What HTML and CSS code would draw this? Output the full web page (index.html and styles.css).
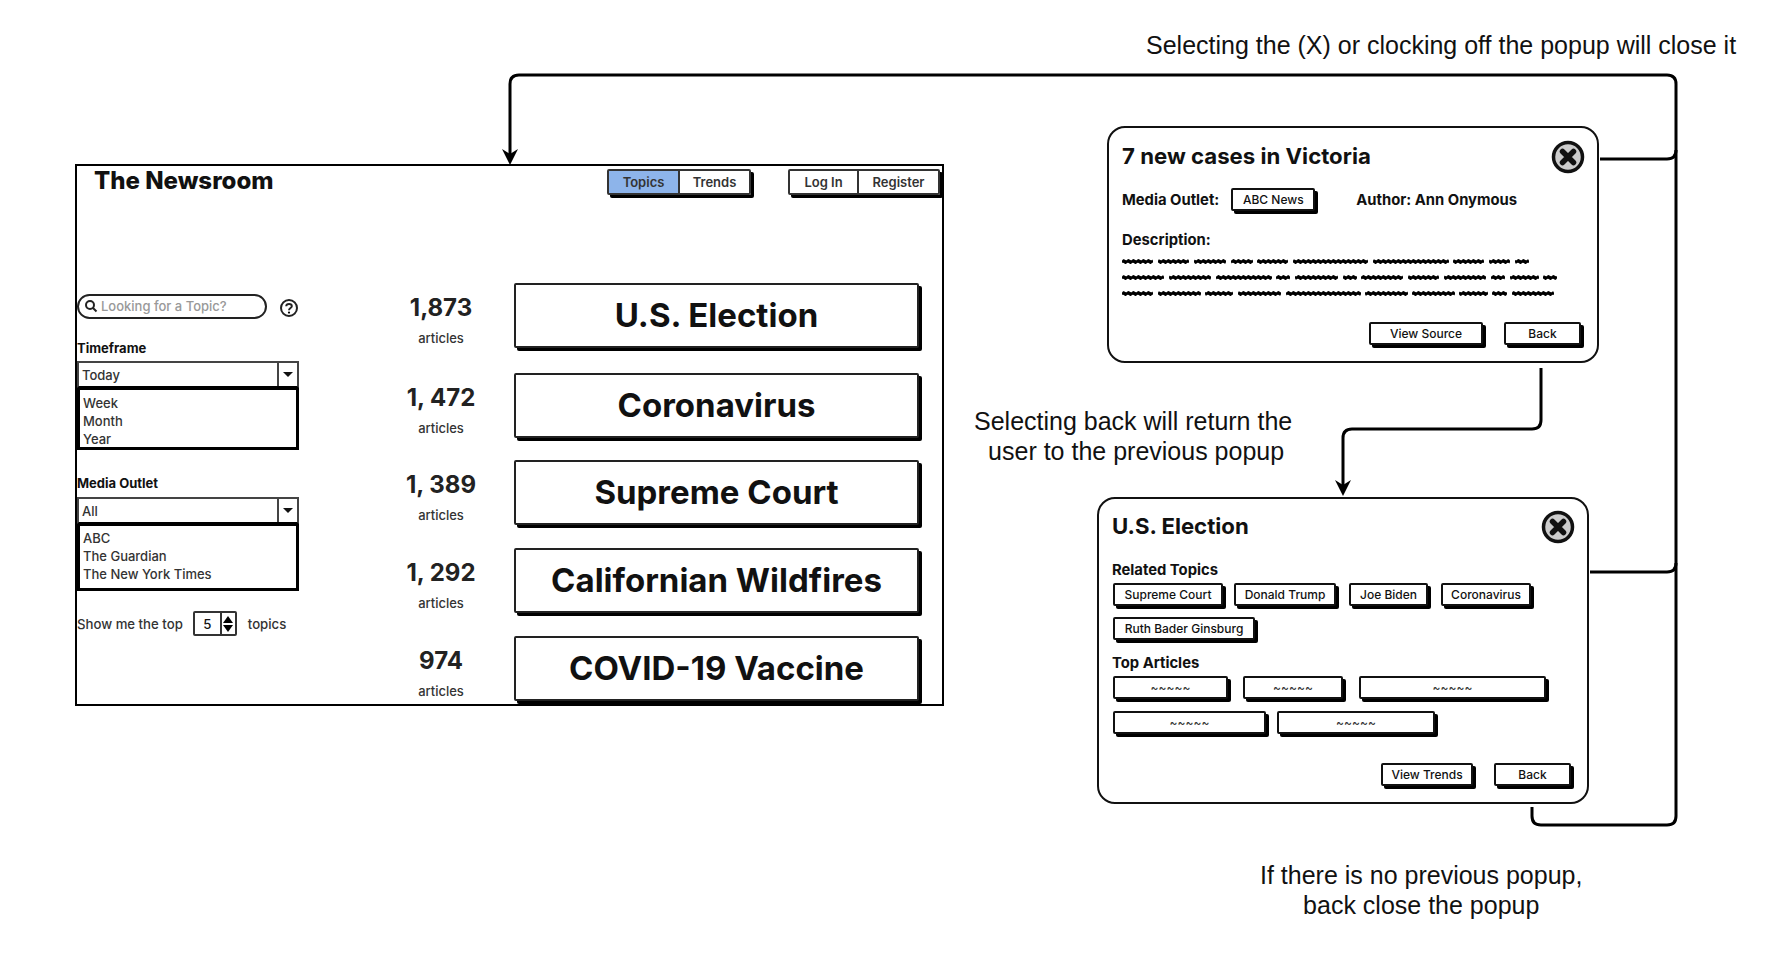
FILE: index.html
```html
<!DOCTYPE html>
<html lang="en">
<head>
    <meta charset="UTF-8">
    <title>The Newsroom - popup flow</title>
    <link rel="stylesheet" href="styles.css">
</head>
<body>
    <div class="canvas">
        <!-- connectors between the screens -->
        <svg class="wires" width="1782" height="958" viewBox="0 0 1782 958">
            <g class="wire">
                <path d="M510 155V84Q510 75 519 75H1667Q1676 75 1676 84V816Q1676 825 1667 825H1541Q1532 825 1532 816V807"/>
                <path d="M1600 159H1667Q1676 159 1676 150"/>
                <path d="M1590 572H1667Q1676 572 1676 563"/>
                <path d="M1541 368V420Q1541 429 1532 429H1352Q1343 429 1343 438V485"/>
            </g>
            <path class="tip" d="M502 149L510 154L518 149L510 165Z"/>
            <path class="tip" d="M1335 480L1343 485L1351 480L1343 496Z"/>
        </svg>

        <p class="note note-close">Selecting the (X) or clocking off the popup will close it</p>
        <p class="note note-back">Selecting back will return the<br><span class="note-nudge">user to the previous popup</span></p>
        <p class="note note-none">If there is no previous popup,<br>back close the popup</p>

        <!-- main screen -->
        <div class="screen">
            <div class="screen-top">
                <h1>The Newsroom</h1>
                <div class="tabs tabs-nav">
                    <span class="tab active tab-topics">Topics</span>
                    <span class="tab tab-trends">Trends</span>
                </div>
                <div class="tabs tabs-user">
                    <span class="tab tab-login">Log In</span>
                    <span class="tab tab-register">Register</span>
                </div>
            </div>
            <div class="screen-body">
                <div class="sidebar">
                    <div class="search-row">
                        <div class="search">
                            <svg width="14" height="14" viewBox="0 0 14 14"><circle cx="6" cy="6" r="4" class="line"/><path d="M9 9L12.5 12.5" class="line"/></svg>
                            <span>Looking for a Topic?</span>
                        </div>
                        <svg class="help" width="20" height="20" viewBox="0 0 20 20"><circle cx="10" cy="10" r="8" class="line"/><path d="M7.2 8.2C7.4 5.4 12.8 5.4 12.8 8.2C12.8 10 10 10 10 12.2" class="line"/><circle cx="10" cy="14.6" r="1.1"/></svg>
                    </div>

                    <div class="field-label label-time">Timeframe</div>
                    <div class="select"><span>Today</span><b class="select-arrow"></b></div>
                    <ul class="options">
                        <li>Week</li>
                        <li>Month</li>
                        <li>Year</li>
                    </ul>

                    <div class="field-label label-media">Media Outlet</div>
                    <div class="select select-media"><span>All</span><b class="select-arrow"></b></div>
                    <ul class="options options-media">
                        <li>ABC</li>
                        <li>The Guardian</li>
                        <li>The New York Times</li>
                    </ul>

                    <div class="top-row">
                        <span>Show me the top</span>
                        <div class="spinner">
                            <span class="spinner-value">5</span>
                            <span class="spinner-btns"><svg width="12" height="20" viewBox="0 0 12 20"><path d="M6 2L11 9H1Z"/><path d="M6 18L11 11H1Z"/></svg></span>
                        </div>
                        <span class="top-after">topics</span>
                    </div>
                </div>

                <div class="topics">
                    <div class="topic-row">
                        <div class="count"><strong>1,873</strong><span>articles</span></div>
                        <div class="topic">U.S. Election</div>
                    </div>
                    <div class="topic-row">
                        <div class="count"><strong>1, 472</strong><span>articles</span></div>
                        <div class="topic">Coronavirus</div>
                    </div>
                    <div class="topic-row">
                        <div class="count"><strong>1, 389</strong><span>articles</span></div>
                        <div class="topic">Supreme Court</div>
                    </div>
                    <div class="topic-row">
                        <div class="count"><strong>1, 292</strong><span>articles</span></div>
                        <div class="topic">Californian Wildfires</div>
                    </div>
                    <div class="topic-row">
                        <div class="count"><strong>974</strong><span>articles</span></div>
                        <div class="topic">COVID-19 Vaccine</div>
                    </div>
                </div>
            </div>
        </div>

        <!-- article popup -->
        <div class="popup popup-article">
            <div class="popup-head">
                <h2>7 new cases in Victoria</h2>
                <svg class="close" width="34" height="34" viewBox="0 0 34 34"><circle cx="17" cy="17" r="14.5" class="close-ring"/><path d="M11.5 11.5L22.5 22.5M22.5 11.5L11.5 22.5" class="close-x"/></svg>
            </div>
            <div class="meta">
                <strong>Media Outlet:</strong>
                <span class="btn btn-outlet">ABC News</span>
                <strong class="author">Author: Ann Onymous</strong>
            </div>
            <div class="section-label desc-label">Description:</div>
            <svg class="scribble" width="440" height="40" viewBox="0 0 440 40">
                <defs>
                    <pattern id="wave" width="5" height="16" patternUnits="userSpaceOnUse">
                        <path d="M0 1Q1.2 -.6 2.5 .6T5 1V4Q3.8 5.6 2.5 4.4T0 4Z"/>
                    </pattern>
                </defs>
                <g fill="url(#wave)">
                    <rect x="0" y="0" width="31" height="5" rx="2"/><rect x="36" y="0" width="31" height="5" rx="2"/><rect x="72" y="0" width="32" height="5" rx="2"/><rect x="109" y="0" width="22" height="5" rx="2"/><rect x="135" y="0" width="31" height="5" rx="2"/><rect x="171" y="0" width="75" height="5" rx="2"/><rect x="251" y="0" width="76" height="5" rx="2"/><rect x="331" y="0" width="31" height="5" rx="2"/><rect x="367" y="0" width="21" height="5" rx="2"/><rect x="393" y="0" width="14" height="5" rx="2"/>
                    <rect x="0" y="16" width="42" height="5" rx="2"/><rect x="47" y="16" width="42" height="5" rx="2"/><rect x="94" y="16" width="56" height="5" rx="2"/><rect x="154" y="16" width="14" height="5" rx="2"/><rect x="173" y="16" width="43" height="5" rx="2"/><rect x="221" y="16" width="14" height="5" rx="2"/><rect x="239" y="16" width="42" height="5" rx="2"/><rect x="286" y="16" width="31" height="5" rx="2"/><rect x="322" y="16" width="42" height="5" rx="2"/><rect x="369" y="16" width="14" height="5" rx="2"/><rect x="388" y="16" width="29" height="5" rx="2"/><rect x="421" y="16" width="14" height="5" rx="2"/>
                    <rect x="0" y="32" width="31" height="5" rx="2"/><rect x="36" y="32" width="43" height="5" rx="2"/><rect x="83" y="32" width="28" height="5" rx="2"/><rect x="116" y="32" width="43" height="5" rx="2"/><rect x="164" y="32" width="75" height="5" rx="2"/><rect x="243" y="32" width="43" height="5" rx="2"/><rect x="290" y="32" width="43" height="5" rx="2"/><rect x="337" y="32" width="29" height="5" rx="2"/><rect x="370" y="32" width="15" height="5" rx="2"/><rect x="390" y="32" width="42" height="5" rx="2"/>
                </g>
            </svg>
            <div class="popup-actions">
                <span class="btn btn-source">View Source</span>
                <span class="btn btn-back">Back</span>
            </div>
        </div>

        <!-- topic popup -->
        <div class="popup popup-topic">
            <div class="popup-head">
                <h2>U.S. Election</h2>
                <svg class="close" width="34" height="34" viewBox="0 0 34 34"><circle cx="17" cy="17" r="14.5" class="close-ring"/><path d="M11.5 11.5L22.5 22.5M22.5 11.5L11.5 22.5" class="close-x"/></svg>
            </div>
            <div class="section-label related-label">Related Topics</div>
            <div class="chips">
                <span class="btn chip chip-w110">Supreme Court</span>
                <span class="btn chip chip-w102">Donald Trump</span>
                <span class="btn chip chip-w79">Joe Biden</span>
                <span class="btn chip chip-w90">Coronavirus</span>
                <span class="btn chip chip-w142">Ruth Bader Ginsburg</span>
            </div>
            <div class="section-label articles-label">Top Articles</div>
            <div class="chips chips-articles">
                <span class="btn chip chip-w115">~~~~~</span>
                <span class="btn chip chip-w100">~~~~~</span>
                <span class="btn chip chip-w187">~~~~~</span>
                <span class="btn chip chip-w153">~~~~~</span>
                <span class="btn chip chip-w158">~~~~~</span>
            </div>
            <div class="popup-actions">
                <span class="btn btn-trends">View Trends</span>
                <span class="btn btn-back">Back</span>
            </div>
        </div>
    </div>
</body>
</html>
```

FILE: styles.css
```css
* {
    box-sizing: border-box;
}

body {
    margin: 0;
    background-color: #fff;
    color: #111;
    font-family: 'Inter', 'Noto Sans', sans-serif;
}

.canvas {
    position: relative;
    width: 1782px;
    height: 958px;
    overflow: hidden;
}

/* connectors */
.wires {
    position: absolute;
    left: 0;
    top: 0;
}

.wire path {
    fill: none;
    stroke: #000;
    stroke-width: 3;
}

.tip {
    fill: #000;
}

.note {
    position: absolute;
    margin: 0;
    font-family: 'Liberation Sans', Arial, sans-serif;
    font-size: 25px;
    line-height: 30px;
    color: #111;
    text-align: center;
    white-space: nowrap;
}

.note-close {
    left: 1146px;
    top: 30px;
}

.note-back {
    left: 974px;
    top: 406px;
}

.note-nudge {
    margin-left: 6px;
}

.note-none {
    left: 1260px;
    top: 860px;
}

/* main screen */
.screen {
    position: absolute;
    left: 75px;
    top: 164px;
    width: 869px;
    height: 542px;
    border: 2px solid #000;
    background-color: #fff;
}

.screen-top {
    display: flex;
    align-items: flex-start;
    height: 117px;
}

h1 {
    margin: 0 0 0 17px;
    width: 513px;
    font-size: 24px;
    line-height: 30px;
    font-weight: 800;
}

.tabs {
    display: flex;
    margin-top: 3px;
    height: 26px;
    border: 2px solid #333;
    border-radius: 2px;
    box-shadow: 3px 3px 0 #000;
    font-size: 13px;
    font-weight: 600;
    color: #333;
}

.tabs-user {
    margin-left: 37px;
}

.tab {
    display: flex;
    align-items: center;
    justify-content: center;
}

.tab + .tab {
    border-left: 2px solid #333;
}

.tab.active {
    background-color: #8db4ea;
}

.tab-topics { width: 69px; }
.tab-trends { width: 71px; }
.tab-login { width: 67px; }
.tab-register { width: 81px; }

.screen-body {
    display: flex;
}

/* filters */
.sidebar {
    width: 222px;
    font-size: 13px;
    font-weight: 500;
    color: #333;
}

.search-row {
    display: flex;
    align-items: center;
    height: 30px;
    margin-top: 8px;
}

.search {
    display: flex;
    align-items: center;
    gap: 3px;
    width: 190px;
    height: 25px;
    padding-left: 5px;
    border: 2px solid #222;
    border-radius: 13px;
    font-weight: 500;
    color: #999;
}

.line {
    fill: none;
    stroke: #222;
    stroke-width: 2;
}

.help {
    margin-left: 12px;
    margin-top: 4px;
}

.field-label {
    color: #111;
    font-size: 13px;
    font-weight: 700;
    line-height: 18px;
}

.label-time {
    margin-top: 18px;
}

.label-media {
    margin-top: 24px;
}

.select {
    display: flex;
    align-items: center;
    justify-content: space-between;
    height: 27px;
    margin-top: 4px;
    padding-left: 3px;
    border: 2px solid #444;
    border-bottom-color: #000;
}

.select-media {
    margin-top: 5px;
}

.select-arrow {
    display: flex;
    align-items: center;
    justify-content: center;
    width: 20px;
    height: 100%;
    border-left: 2px solid #444;
}

.select-arrow::after {
    content: "";
    border-left: 5px solid transparent;
    border-right: 5px solid transparent;
    border-top: 5px solid #111;
}

.options {
    margin: 0;
    padding: 4px 0 0 3px;
    height: 62px;
    list-style: none;
    border: 3px solid #000;
    border-top-width: 2px;
    line-height: 18px;
}

.options li {
    height: 18px;
}

.options-media {
    height: 67px;
    padding-top: 3px;
}

.top-row {
    display: flex;
    align-items: center;
    height: 25px;
    margin-top: 20px;
    font-size: 13.2px;
    white-space: nowrap;
}

.spinner {
    display: flex;
    align-items: center;
    width: 44px;
    height: 25px;
    margin-left: 10px;
    border: 2px solid #333;
    border-radius: 2px;
    color: #111;
}

.spinner-value {
    width: 25px;
    text-align: center;
}

.spinner-btns {
    display: flex;
    align-items: center;
    justify-content: center;
    flex: 1;
    height: 100%;
    border-left: 2px solid #333;
}

.top-after {
    margin-left: 11px;
}

/* topics */
.topics {
    display: flex;
    flex-direction: column;
}

.topic-row {
    display: flex;
    height: 65px;
    margin-bottom: 23px;
}

.topic-row:first-child {
    margin-bottom: 25px;
}

.topic-row:nth-child(2) {
    margin-bottom: 22px;
}

.count {
    display: flex;
    flex-direction: column;
    align-items: center;
    width: 215px;
    padding-left: 69px;
    color: #222;
}

.count strong {
    margin-top: 9px;
    font-size: 24px;
    line-height: 32px;
    font-weight: 700;
}

.count span {
    margin-top: 5px;
    font-size: 13px;
    line-height: 18px;
    font-weight: 500;
    color: #333;
}

.topic {
    display: flex;
    align-items: center;
    justify-content: center;
    width: 405px;
    height: 65px;
    padding-bottom: 2px;
    border: 2px solid #222;
    border-radius: 2px;
    box-shadow: 3px 3px 0 #000;
    font-size: 33px;
    font-weight: 700;
    background-color: #fff;
}

/* popups */
.popup {
    position: absolute;
    border: 2px solid #111;
    border-radius: 18px;
    background-color: #fff;
    padding: 0 15px 0 13px;
}

.popup-article {
    left: 1107px;
    top: 126px;
    width: 492px;
    height: 237px;
}

.popup-topic {
    left: 1097px;
    top: 497px;
    width: 492px;
    height: 307px;
}

.popup-head {
    display: flex;
    align-items: center;
    justify-content: space-between;
    height: 34px;
    margin-top: 12px;
    margin-right: -3px;
}

h2 {
    margin: -3px 0 0;
    font-size: 22.2px;
    line-height: 30px;
    font-weight: 700;
}

.popup-topic .popup-head {
    margin-top: 11px;
}

.close-ring {
    fill: #ccc;
    stroke: #111;
    stroke-width: 3.5;
}

.close-x {
    fill: none;
    stroke: #111;
    stroke-width: 5.5;
    stroke-linecap: round;
}

.meta {
    display: flex;
    align-items: center;
    margin-top: 14px;
    white-space: nowrap;
}

.meta strong,
.section-label {
    font-size: 14.8px;
    font-weight: 700;
}

.author {
    margin-left: 41px;
}

.btn {
    display: flex;
    align-items: center;
    justify-content: center;
    height: 23px;
    border: 2px solid #111;
    border-radius: 2px;
    box-shadow: 3px 3px 0 #000;
    background-color: #fff;
    font-size: 12px;
    font-weight: 500;
    white-space: nowrap;
}

.btn-outlet {
    width: 84px;
    margin-left: 12px;
}

.section-label {
    line-height: 18px;
}

.desc-label {
    margin-top: 20px;
}

.scribble {
    display: block;
    margin-top: 10px;
}

.scribble path {
    fill: #000;
}

.popup-actions {
    position: absolute;
    right: 16px;
    display: flex;
    gap: 21px;
}

.popup-article .popup-actions {
    top: 194px;
}

.popup-topic .popup-actions {
    top: 264px;
}

.btn-source { width: 114px; }
.btn-trends { width: 92px; }
.btn-back { width: 77px; }

.related-label {
    margin-top: 17px;
}

.articles-label {
    margin-top: 14px;
}

.chips {
    display: flex;
    flex-wrap: wrap;
    gap: 11px;
    width: 440px;
    margin: 4px 0 0 1px;
}

.chips-articles {
    row-gap: 12px;
}

.chips-articles .chip {
    color: #333;
}

.chip-w110 { width: 110px; }
.chip-w102 { width: 102px; margin-right: 2px; }
.chip-w79 { width: 79px; margin-right: 2px; }
.chip-w90 { width: 90px; }
.chip-w142 { width: 142px; }
.chip-w115 { width: 115px; margin-right: 4px; }
.chip-w100 { width: 100px; margin-right: 5px; }
.chip-w187 { width: 187px; }
.chip-w153 { width: 153px; }
.chip-w158 { width: 158px; }
```
